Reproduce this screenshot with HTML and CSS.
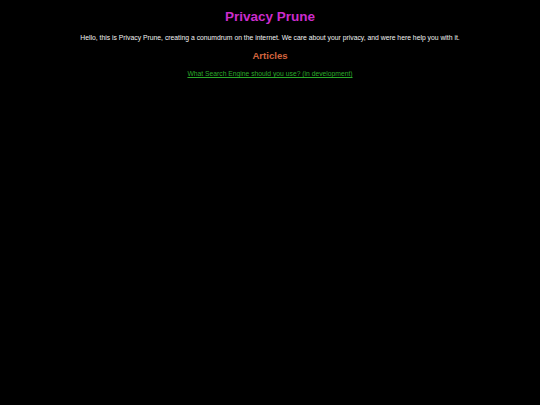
FILE: index.html
```html
<!DOCTYPE html>
<html>
<head>
<meta charset="utf-8">
<title>Privacy Prune</title>
<link rel="stylesheet" href="styles.css">
</head>
<body>
<h1 class="title">Privacy Prune</h1>
<p class="intro">Hello, this is Privacy Prune, creating a conumdrum on the internet. We care about your privacy, and were here help you with it.</p>
<h2 class="section">Articles</h2>
<p class="links"><a class="article-link" href="#">What Search Engine should you use? (in development)</a></p>
</body>
</html>
```
FILE: styles.css
```css
html, body {
  background: #000;
}
body {
  margin: 0;
  padding: 9px 8px 0;
  font-family: "Liberation Sans", Arial, sans-serif;
  text-align: center;
  color: #fff;
}
.title {
  font-size: 13.5px;
  line-height: 16px;
  margin: 0;
  color: #cc2ccc;
  font-weight: bold;
}
.intro {
  font-size: 6.8px;
  line-height: 10px;
  margin: 8px 0 0;
  color: #f2f2f2;
}
.section {
  font-size: 9.6px;
  line-height: 12px;
  margin: 7px 0 0;
  color: #d2643e;
  font-weight: bold;
}
.links {
  font-size: 6.75px;
  line-height: 10px;
  margin: 7px 0 0;
}
.article-link {
  color: #2aaa2a;
}
```
